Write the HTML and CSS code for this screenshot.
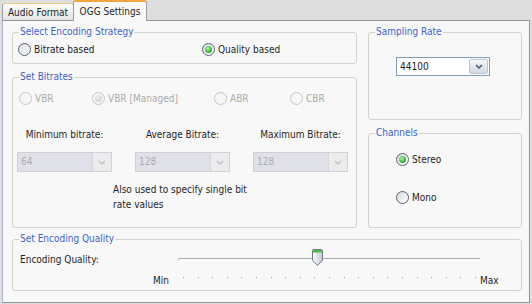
FILE: index.html
```html
<!DOCTYPE html>
<html lang="en">
<head>
    <meta charset="UTF-8">
    <meta name="viewport" content="width=device-width, initial-scale=1.0">
    <title>OGG Settings</title>
    <link rel="stylesheet" href="styles.css">
</head>
<body>
    <div class="window">
        <div class="tabs">
            <div class="tab">Audio Format</div>
            <div class="tab active">OGG Settings</div>
        </div>

        <div class="panel">
            <div class="columns">
                <div class="column left">
                    <fieldset class="group strategy">
                        <legend>Select Encoding Strategy</legend>
                        <div class="options">
                            <label class="option"><span class="radio"></span>Bitrate based</label>
                            <label class="option"><span class="radio checked"></span>Quality based</label>
                        </div>
                    </fieldset>

                    <fieldset class="group bitrates">
                        <legend>Set Bitrates</legend>
                        <div class="options modes">
                            <label class="option disabled"><span class="radio"></span>VBR</label>
                            <label class="option disabled"><span class="radio checked"></span>VBR [Managed]</label>
                            <label class="option disabled"><span class="radio"></span>ABR</label>
                            <label class="option disabled"><span class="radio"></span>CBR</label>
                        </div>
                        <div class="bitrate-fields">
                            <div class="field">
                                <span class="field-label">Minimum bitrate:</span>
                                <div class="select disabled">
                                    <span class="select-value">64</span>
                                    <span class="select-button"><svg width="8" height="5" viewBox="0 0 8 5"><path d="M1 1l3 3 3-3" fill="none" stroke-width="1.4"/></svg></span>
                                </div>
                            </div>
                            <div class="field">
                                <span class="field-label">Average Bitrate:</span>
                                <div class="select disabled">
                                    <span class="select-value">128</span>
                                    <span class="select-button"><svg width="8" height="5" viewBox="0 0 8 5"><path d="M1 1l3 3 3-3" fill="none" stroke-width="1.4"/></svg></span>
                                </div>
                            </div>
                            <div class="field">
                                <span class="field-label">Maximum Bitrate:</span>
                                <div class="select disabled">
                                    <span class="select-value">128</span>
                                    <span class="select-button"><svg width="8" height="5" viewBox="0 0 8 5"><path d="M1 1l3 3 3-3" fill="none" stroke-width="1.4"/></svg></span>
                                </div>
                            </div>
                        </div>
                        <p class="note">Also used to specify single bit<br>rate values</p>
                    </fieldset>
                </div>

                <div class="column right">
                    <fieldset class="group sampling">
                        <legend>Sampling Rate</legend>
                        <div class="select">
                            <span class="select-value">44100</span>
                            <span class="select-button"><svg width="8" height="5" viewBox="0 0 8 5"><path d="M1 1l3 3 3-3" fill="none" stroke-width="1.6"/></svg></span>
                        </div>
                    </fieldset>

                    <fieldset class="group channels">
                        <legend>Channels</legend>
                        <div class="channel-list">
                            <label class="option"><span class="radio checked"></span>Stereo</label>
                            <label class="option"><span class="radio"></span>Mono</label>
                        </div>
                    </fieldset>
                </div>
            </div>

            <fieldset class="group quality">
                <legend>Set Encoding Quality</legend>
                <div class="quality-grid">
                    <span class="quality-label">Encoding Quality:</span>
                    <div class="track">
                        <span class="thumb">
                            <svg width="11" height="17" viewBox="0 0 11 17">
                                <defs>
                                    <linearGradient id="thumbBody" x1="0" x2="1" y1="0" y2="0">
                                        <stop offset="0" stop-color="#fbfcfd"/>
                                        <stop offset="1" stop-color="#c3c8d0"/>
                                    </linearGradient>
                                </defs>
                                <path d="M0.5 2 Q0.5 0.5 2 0.5 H9 Q10.5 0.5 10.5 2 V11.5 L5.5 16.3 L0.5 11.5 Z" fill="url(#thumbBody)" stroke="#707a86"/>
                                <rect x="1" y="1" width="9" height="2.5" fill="#46c046"/>
                            </svg>
                        </span>
                    </div>
                    <span class="min">Min</span>
                    <div class="ticks">
                        <span></span><span></span><span></span><span></span><span></span><span></span><span></span>
                        <span></span><span></span><span></span><span></span><span></span><span></span><span></span>
                        <span></span><span></span><span></span><span></span><span></span><span></span><span></span>
                    </div>
                    <span class="max">Max</span>
                </div>
            </fieldset>
        </div>
    </div>
</body>
</html>
```
FILE: styles.css
```css
* {
    padding: 0;
    margin: 0;
    box-sizing: border-box;
}
body {
    width: 532px;
    height: 304px;
    overflow: hidden;
    background: #dedede;
    font-family: "DejaVu Sans Condensed", "DejaVu Sans", sans-serif;
    font-size: 10px;
    color: #1e1e1e;
}
.window {
    padding-left: 2px;
}

/* tabs */
.tabs {
    display: flex;
    align-items: flex-end;
    height: 20px;
}
.tab {
    width: 72px;
    height: 17px;
    display: flex;
    align-items: center;
    justify-content: center;
    border: 1px solid #9a9ea6;
    border-top-color: #f1c990;
    border-bottom: none;
    border-radius: 3px 3px 0 0;
    background: linear-gradient(#fdfdfd, #e4e4e4);
}
.tab.active {
    width: 74px;
    height: 21px;
    margin-bottom: -1px;
    margin-left: -1px;
    position: relative;
    z-index: 1;
    border-top: 2px solid #f2a640;
    background: #f9f9f9;
    padding-bottom: 1px;
}

.panel {
    width: 528px;
    height: 283px;
    border: 1px solid #8f959e;
    border-left-color: #a9b0d4;
    background: #f8f8f8;
    padding: 5px 7px 0 9px;
}
.columns {
    display: flex;
    gap: 11px;
}
.column {
    display: flex;
    flex-direction: column;
    gap: 7px;
}
.left {
    width: 345px;
}
.right {
    width: 154px;
}

/* group boxes */
.group {
    border: 1px solid #d3d3cb;
    border-radius: 3px;
}
legend {
    margin-left: 6px;
    padding: 0 1px;
    line-height: 12px;
    color: #3d62c9;
}
.strategy {
    height: 38px;
}
.bitrates {
    height: 157px;
}
.sampling {
    height: 94px;
}
.channels {
    height: 101px;
}
.quality {
    width: 510px;
    height: 58px;
    margin-top: 5px;
}

/* radios */
.options {
    display: flex;
    padding: 5px 0 0 5px;
}
.option {
    display: flex;
    align-items: center;
    gap: 3px;
    height: 13px;
}
.strategy .option:first-child {
    width: 184px;
}
.radio {
    width: 13px;
    height: 13px;
    flex-shrink: 0;
    position: relative;
    border: 1px solid #56616f;
    border-radius: 50%;
    background: linear-gradient(135deg, #d8dbe0, #ffffff);
}
.radio.checked::after {
    content: "";
    position: absolute;
    inset: 2px;
    border-radius: 50%;
    background: radial-gradient(circle at 40% 35%, #b6f0a4, #3cbc3c 55%, #17861a);
}
.option.disabled {
    color: #ababab;
}
.option.disabled .radio {
    border-color: #c6c6c6;
    background: #f6f6f6;
}
.option.disabled .radio.checked::after {
    background: radial-gradient(circle at 40% 35%, #eeeeee, #c9c9c9);
}

/* bitrates */
.modes {
    padding: 9px 0 0 6px;
}
.modes .option:nth-child(1) {
    width: 73px;
}
.modes .option:nth-child(2) {
    width: 122px;
}
.modes .option:nth-child(3) {
    width: 76px;
}
.bitrate-fields {
    display: flex;
    gap: 23px;
    padding-left: 4px;
    margin-top: 24px;
}
.field {
    width: 95px;
    display: flex;
    flex-direction: column;
    align-items: center;
    gap: 11px;
    line-height: 12px;
}
.note {
    margin: 10px 0 0 100px;
    line-height: 15px;
}

/* combo boxes */
.select {
    width: 95px;
    height: 20px;
    display: flex;
    border: 1px solid #7f9db9;
    background: #fff;
}
.select-value {
    flex: 1;
    display: flex;
    align-items: center;
    padding-left: 3px;
}
.select-button {
    width: 19px;
    margin: 1px;
    display: flex;
    align-items: center;
    justify-content: center;
    border: 1px solid #b9c3d3;
    border-radius: 2px;
    background: linear-gradient(#f7f8fa, #d3d9e2);
    stroke: #4b5b78;
}
.select.disabled {
    border-color: #d0d0d6;
    background: #e0e0e8;
    color: #acacac;
}
.select.disabled .select-button {
    margin: 0;
    border: none;
    border-left: 1px solid #d6d6d6;
    border-radius: 0;
    background: #ececef;
    stroke: #c2c2c2;
}
.sampling .select {
    width: 94px;
    height: 19px;
    margin: 19px 0 0 27px;
}

/* channels */
.channel-list {
    display: flex;
    flex-direction: column;
    gap: 25px;
    padding: 14px 0 0 27px;
}

/* quality slider */
.quality-grid {
    display: grid;
    grid-template-columns: 133px 25px 302px auto;
    grid-template-rows: 16px auto;
    padding: 7px 0 0 7px;
}
.quality-label {
    align-self: center;
    line-height: 12px;
}
.track {
    grid-column: 3;
    height: 3px;
    margin-top: 6px;
    position: relative;
    border-top: 1px solid #acacac;
    border-left: 1px solid #acacac;
    border-bottom: 1px solid #ffffff;
    border-radius: 2px 0 0 0;
}
.thumb {
    position: absolute;
    left: 133px;
    top: -10px;
    display: flex;
}
.min {
    grid-column: 2;
    margin-top: 7px;
    line-height: 12px;
}
.ticks {
    grid-column: 3;
    display: flex;
    justify-content: space-between;
    padding: 0 4px 0 5px;
    margin-top: 9px;
    height: 1px;
}
.ticks span {
    width: 1px;
    height: 1px;
    background: #9a9a9a;
}
.max {
    grid-column: 4;
    margin-top: 7px;
    line-height: 12px;
}
```
